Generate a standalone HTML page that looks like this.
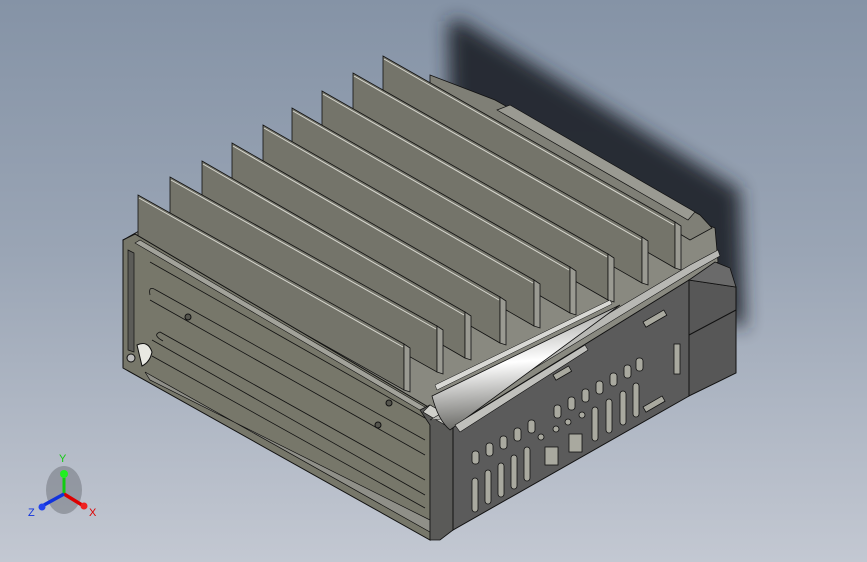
<!DOCTYPE html>
<html><head><meta charset="utf-8"><style>
html,body{margin:0;padding:0;width:867px;height:562px;overflow:hidden}
body{background:linear-gradient(180deg,#8593a6 0%,#9aa5b5 45%,#c3c8d2 100%)}
svg{position:absolute;left:0;top:0}
</style></head><body>
<svg width="867" height="562" viewBox="0 0 867 562" xmlns="http://www.w3.org/2000/svg">
<defs>
<filter id="bl" x="-20%" y="-20%" width="140%" height="140%"><feGaussianBlur stdDeviation="9"/></filter>
<linearGradient id="cone" x1="0" y1="0" x2="0.12" y2="1">
<stop offset="0" stop-color="#8a8a86"/><stop offset="0.5" stop-color="#ffffff"/><stop offset="1" stop-color="#6a6a66"/></linearGradient>
</defs>
<polygon points="448,22 460,20 740,190 745,330 690,300 450,120" fill="#23262d" filter="url(#bl)" opacity="0.95"/>
<polygon points="123,240 385,92 715,228 718,262 690,280 453,426 430,425" fill="#898980" stroke="#111" stroke-width="0.8"/>
<polygon points="430,75 495,100 700,215 712,228 690,240 640,210 430,90" fill="#7f7f76" stroke="#111" stroke-width="0.8"/>
<polygon points="497,110 510,105 695,212 688,220" fill="#9a9a92" stroke="#111" stroke-width="0.7"/>
<g stroke="#111" stroke-width="0.8">
<polygon points="383,56 675,222 675,268 383,100" fill="#74746a"/><polygon points="675,222 681,226 681,270 675,268" fill="#9a9a92"/>
<polygon points="353,73 642,237 642,283 353,118" fill="#74746a"/><polygon points="642,237 648,241 648,285 642,283" fill="#9a9a92"/>
<polygon points="322,91 608,254 608,300 322,136" fill="#74746a"/><polygon points="608,254 614,258 614,302 608,300" fill="#9a9a92"/>
<polygon points="292,108 570,267 570,313 292,153" fill="#74746a"/><polygon points="570,267 576,271 576,315 570,313" fill="#9a9a92"/>
<polygon points="263,125 534,280 534,326 263,170" fill="#74746a"/><polygon points="534,280 540,284 540,328 534,326" fill="#9a9a92"/>
<polygon points="232,143 500,297 500,343 232,188" fill="#74746a"/><polygon points="500,297 506,301 506,345 500,343" fill="#9a9a92"/>
<polygon points="202,161 465,312 465,358 202,206" fill="#74746a"/><polygon points="465,312 471,316 471,360 465,358" fill="#9a9a92"/>
<polygon points="170,177 437,326 437,372 170,222" fill="#74746a"/><polygon points="437,326 443,330 443,374 437,372" fill="#9a9a92"/>
<polygon points="138,195 404,344 404,390 138,240" fill="#74746a"/><polygon points="404,344 410,348 410,392 404,390" fill="#9a9a92"/>
</g>
<g stroke="#d8d8d0" stroke-width="1">
<line x1="384" y1="59" x2="674" y2="225"/><line x1="354" y1="76" x2="641" y2="240"/><line x1="323" y1="94" x2="607" y2="257"/>
<line x1="293" y1="111" x2="569" y2="270"/><line x1="264" y1="128" x2="533" y2="283"/><line x1="233" y1="146" x2="499" y2="300"/>
<line x1="203" y1="164" x2="464" y2="315"/><line x1="171" y1="180" x2="436" y2="329"/><line x1="139" y1="198" x2="403" y2="347"/>
</g>
<polygon points="123,240 135,234 430,408 430,540 123,368" fill="#77776a" stroke="#111" stroke-width="1"/>
<polygon points="128,250 134,253 134,352 128,350" fill="#5c5c58" stroke="#111" stroke-width="0.7"/>
<polygon points="150,380 430,520 430,532 145,372" fill="#8f8f88" stroke="#111" stroke-width="0.7"/>
<polygon points="140,240 430,410 430,416 135,243" fill="#a2a29a" stroke="#111" stroke-width="0.6"/>
<g stroke="#111" stroke-width="0.8" fill="none">
<path d="M150,262 L425,418"/><path d="M150,300 L425,455"/><path d="M152,340 L425,495"/><path d="M152,356 L425,508"/>
<path d="M150,295 Q148,285 156,290 L425,440"/><path d="M163,341 Q152,335 160,332 L425,480"/>
</g>
<circle cx="188" cy="317" r="3" fill="#55554e" stroke="#111"/><circle cx="378" cy="425" r="3" fill="#55554e" stroke="#111"/>
<circle cx="389" cy="403" r="3" fill="#55554e" stroke="#111"/>
<path d="M137,345 Q148,340 152,352 Q150,362 142,366 Z" fill="#e8e8e2" stroke="#111"/><circle cx="131" cy="358" r="4" fill="#bbb" stroke="#111"/>
<polygon points="420,410 430,405 453,420 453,530 440,540 430,540 430,425" fill="#5a5a58" stroke="#111" stroke-width="0.8"/>
<polygon points="430,405 453,418 445,425 423,412" fill="#cfcfca" stroke="#111" stroke-width="0.7"/>
<polygon points="453,426 689,280 689,396 453,530" fill="#5b5b5b" stroke="#111" stroke-width="1"/>
<polygon points="689,280 736,287 736,373 689,396" fill="#575757" stroke="#111" stroke-width="1"/>
<polygon points="689,280 715,262 730,268 736,287" fill="#6a6a6a" stroke="#111" stroke-width="0.8"/>
<line x1="689" y1="335" x2="736" y2="310" stroke="#111"/>
<polygon points="430,420 690,265 718,250 720,256 692,272 453,418" fill="#b8b8b4" stroke="#111" stroke-width="0.6"/>
<!-- narrow cone -->
<path d="M432,396 L620,305 L450,430 Q438,420 432,396 Z" fill="url(#cone)" stroke="#111" stroke-width="0.8"/>
<path d="M455,425 L585,345 L588,350 L460,432 Z" fill="#c0c0bc" stroke="#111" stroke-width="0.6"/>
<path d="M435,385 L610,300 L612,304 L437,390 Z" fill="#d8d8d4" stroke="#111" stroke-width="0.5"/>
<g fill="#a9a99f" stroke="#111" stroke-width="0.8">
<rect x="643" y="322" width="24" height="6" transform="rotate(-30 643 322)"/>
<rect x="674" y="344" width="6" height="30"/>
<rect x="643" y="407" width="22" height="6" transform="rotate(-30 643 407)"/>
<rect x="553" y="375" width="18" height="6" transform="rotate(-30 553 375)"/>
<rect x="472" y="451" width="7" height="13" rx="3"/><rect x="486" y="443" width="7" height="13" rx="3"/>
<rect x="500" y="436" width="7" height="13" rx="3"/><rect x="514" y="428" width="7" height="13" rx="3"/>
<rect x="528" y="420" width="7" height="13" rx="3"/><rect x="554" y="405" width="7" height="13" rx="3"/>
<rect x="568" y="397" width="7" height="13" rx="3"/><rect x="582" y="389" width="7" height="13" rx="3"/>
<rect x="596" y="381" width="7" height="13" rx="3"/><rect x="610" y="373" width="7" height="13" rx="3"/>
<rect x="624" y="365" width="7" height="13" rx="3"/><rect x="636" y="358" width="7" height="13" rx="3"/>
<rect x="472" y="478" width="6" height="34" rx="3"/><rect x="485" y="470" width="6" height="34" rx="3"/>
<rect x="498" y="463" width="6" height="34" rx="3"/><rect x="511" y="455" width="6" height="34" rx="3"/>
<rect x="524" y="447" width="6" height="34" rx="3"/>
<rect x="592" y="407" width="6" height="34" rx="3"/><rect x="606" y="399" width="6" height="34" rx="3"/>
<rect x="620" y="391" width="6" height="34" rx="3"/><rect x="633" y="383" width="6" height="34" rx="3"/>
<rect x="545" y="447" width="13" height="18"/><rect x="569" y="434" width="13" height="18"/>
<circle cx="541" cy="437" r="3"/><circle cx="556" cy="429" r="3"/><circle cx="568" cy="422" r="3"/><circle cx="582" cy="415" r="3"/>
</g>
<ellipse cx="64" cy="490" rx="18" ry="24" fill="#6c7078" opacity="0.5"/>
<path d="M64,478 L64,494" stroke="#1c1" stroke-width="3"/><circle cx="64" cy="474" r="4" fill="#2e2"/>
<path d="M64,494 L82,505" stroke="#d00" stroke-width="3.5"/><circle cx="84" cy="506" r="3.5" fill="#e22"/>
<path d="M64,494 L44,505" stroke="#13d" stroke-width="3.5"/><circle cx="42" cy="507" r="3.5" fill="#24e"/>
<text x="59" y="462" font-family="Liberation Sans,sans-serif" font-size="11" fill="#1c1">Y</text>
<text x="89" y="516" font-family="Liberation Sans,sans-serif" font-size="11" fill="#d00">X</text>
<text x="28" y="516" font-family="Liberation Sans,sans-serif" font-size="11" fill="#13d">Z</text>
</svg>
</body></html>
